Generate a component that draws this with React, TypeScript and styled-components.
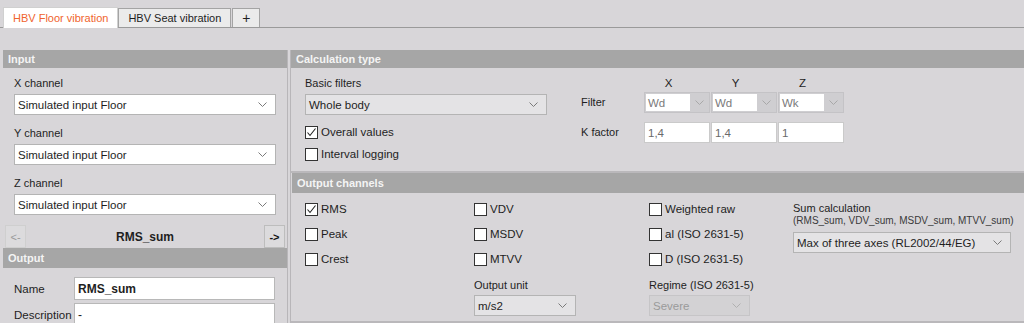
import styled, { createGlobalStyle } from "styled-components";

const GlobalStyle = createGlobalStyle`
  html, body {
    margin: 0;
    padding: 0;
    background: #d8d6d9;
    font-family: "Liberation Sans", Arial, sans-serif;
    font-size: 11px;
    color: #1e1e1e;
    overflow: hidden;
  }
`;

const Page = styled.div`
  width: 1024px;
  height: 323px;
  display: flex;
  flex-direction: column;
`;

const TabBar = styled.div`
  display: flex;
  align-items: flex-end;
  height: 28px;
  padding-left: 3px;
  border-bottom: 1px solid #9a9a9a;
  box-sizing: border-box;
`;

const Tab = styled.div<{ $active?: boolean }>`
  height: ${(p) => (p.$active ? "21px" : "19px")};
  display: flex;
  align-items: center;
  padding: 0 9px;
  box-sizing: border-box;
  font-size: 11px;
  background: ${(p) => (p.$active ? "#ffffff" : "#ebebeb")};
  color: ${(p) => (p.$active ? "#f0642d" : "#1e1e1e")};
  border: 1px solid ${(p) => (p.$active ? "#d0d0d0" : "#a4a4a4")};
  border-bottom: none;
  margin-bottom: ${(p) => (p.$active ? "-1px" : "0")};
`;

const PlusTab = styled(Tab)`
  width: 28px;
  justify-content: center;
  padding: 0;
  font-size: 14px;
  margin-left: 1px;
`;

const Main = styled.div`
  display: flex;
  margin-top: 22px;
  flex: 1;
  min-height: 0;
`;

const LeftPanel = styled.div`
  width: 284px;
  margin-left: 3px;
  border-right: 1px solid #b8b6b9;
  display: flex;
  flex-direction: column;
`;

const RightPanel = styled.div`
  flex: 1;
  margin-left: 2px;
  border-left: 1px solid #b8b6b9;
  display: flex;
  flex-direction: column;
`;

const Header = styled.div<{ $tall?: boolean }>`
  height: ${(p) => (p.$tall ? "20px" : "18px")};
  background: #a6a6a6;
  color: #f4f4f4;
  font-weight: bold;
  font-size: 11px;
  display: flex;
  align-items: center;
  padding-left: 5px;
  flex-shrink: 0;
`;

const LeftBody = styled.div`
  padding: 7px 11px 0 11px;
  display: flex;
  flex-direction: column;
`;

const Label = styled.div<{ $small?: boolean }>`
  height: ${(p) => (p.$small ? "12px" : "16px")};
  line-height: ${(p) => (p.$small ? "12px" : "16px")};
  font-size: ${(p) => (p.$small ? "10px" : "11px")};
  color: ${(p) => (p.$small ? "#3a3a3a" : "#1e1e1e")};
  white-space: nowrap;
`;

const GridLabel = styled(Label)`
  height: 21px;
  line-height: 21px;
`;

const SumLabel = styled(Label)`
  height: 14px;
  line-height: 14px;
  margin-top: -1px;
`;

const Field = styled.div<{ $mb?: number }>`
  display: flex;
  flex-direction: column;
  gap: 3px;
  margin-bottom: ${(p) => (p.$mb ?? 10)}px;
`;

const SelectBox = styled.div<{ $w?: number; $tone?: "white" | "grey" | "disabled" }>`
  width: ${(p) => (p.$w ? `${p.$w}px` : "auto")};
  height: 21px;
  box-sizing: border-box;
  display: flex;
  align-items: center;
  justify-content: space-between;
  padding: 0 8px 0 3px;
  background: ${(p) =>
    p.$tone === "grey" ? "#e4e3e5" : p.$tone === "disabled" ? "#d3d2d4" : "#ffffff"};
  border: 1px solid ${(p) => (p.$tone === "disabled" ? "#c6c5c7" : "#b4b4b4")};
  color: ${(p) => (p.$tone === "disabled" ? "#9a9a9a" : "#1e1e1e")};
  font-size: 11.5px;
  white-space: nowrap;
`;

const Chevron = ({ color = "#7a7a7a" }: { color?: string }) => (
  <svg width="9" height="5" viewBox="0 0 9 5">
    <polyline points="0.5,0.5 4.5,4.5 8.5,0.5" fill="none" stroke={color} strokeWidth="1" />
  </svg>
);

const NavRow = styled.div`
  display: flex;
  align-items: center;
  justify-content: space-between;
  height: 23px;
  margin: 0 -9px 0 -9px;
`;

const NavButton = styled.div<{ $disabled?: boolean }>`
  width: 21px;
  height: 23px;
  box-sizing: border-box;
  background: #dcdbdd;
  border: 1px solid ${(p) => (p.$disabled ? "#cfcfcf" : "#bdbdbd")};
  color: ${(p) => (p.$disabled ? "#9a9a9a" : "#111")};
  display: flex;
  align-items: center;
  justify-content: center;
  font-size: 11px;
  font-weight: ${(p) => (p.$disabled ? "normal" : "bold")};
`;

const NavTitle = styled.div`
  font-weight: bold;
  font-size: 12px;
  color: #1e1e1e;
`;

const OutputBody = styled.div`
  padding: 9px 12px 0 11px;
  display: flex;
  flex-direction: column;
  gap: 3px;
`;

const FormRow = styled.div`
  display: flex;
  align-items: center;
`;

const FormLabel = styled.div`
  width: 60px;
  font-size: 11.5px;
`;

const TextInput = styled.div<{ $bold?: boolean }>`
  flex: 1;
  height: 23px;
  box-sizing: border-box;
  background: #fff;
  border: 1px solid #b8b8b8;
  display: flex;
  align-items: center;
  padding-left: 3px;
  font-weight: ${(p) => (p.$bold ? "bold" : "normal")};
  font-size: 12px;
`;

const CalcSection = styled.div`
  height: 121px;
  flex-shrink: 0;
  border-bottom: 2px solid #bab8bb;
  display: flex;
  flex-direction: column;
`;

const CalcBody = styled.div`
  display: flex;
  padding: 7px 0 0 14px;
`;

const BasicCol = styled.div`
  width: 242px;
  display: flex;
  flex-direction: column;
`;

const CheckRow = styled.div`
  display: flex;
  align-items: center;
  gap: 3px;
  height: 14px;
  font-size: 11.5px;
  white-space: nowrap;
`;

const CheckStack = styled.div<{ $gap: number }>`
  display: flex;
  flex-direction: column;
  gap: ${(p) => p.$gap}px;
`;

const Box = styled.div`
  width: 13px;
  height: 13px;
  box-sizing: border-box;
  background: #fff;
  border: 1px solid #333;
  display: flex;
  align-items: center;
  justify-content: center;
`;

const Check = ({ label, checked }: { label: string; checked?: boolean }) => (
  <CheckRow>
    <Box>
      {checked && (
        <svg width="11" height="11" viewBox="0 0 11 11">
          <polyline points="1.5,5.5 4,8.5 9.5,1.5" fill="none" stroke="#222" strokeWidth="1.1" />
        </svg>
      )}
    </Box>
    {label}
  </CheckRow>
);

const AxisGrid = styled.div`
  margin-left: 34px;
  display: grid;
  grid-template-columns: 62px 66px 66px 66px;
  grid-template-rows: 17px 30px 21px;
  column-gap: 1px;
  align-items: start;
`;

const AxisHead = styled.div`
  text-align: center;
  font-size: 11.5px;
  line-height: 14px;
  padding-right: 17px;
  margin-top: 1px;
`;

const AxisSelect = styled.div`
  height: 21px;
  box-sizing: border-box;
  display: flex;
  background: #cfced1;
  border: 1px solid #c4c3c6;
`;

const AxisValue = styled.div`
  flex: 1;
  background: #fff;
  margin: 1px 0 1px 1px;
  display: flex;
  align-items: center;
  padding-left: 2px;
  color: #7a7a7a;
  font-size: 11.5px;
`;

const AxisArrow = styled.div`
  width: 19px;
  display: flex;
  align-items: center;
  justify-content: center;
`;

const AxisInput = styled.div`
  height: 21px;
  box-sizing: border-box;
  background: #fff;
  border: 1px solid #cacaca;
  display: flex;
  align-items: center;
  padding-left: 3px;
  color: #6a6a6a;
  font-size: 11.5px;
`;

const OutputSection = styled.div`
  flex: 1;
  display: flex;
  flex-direction: column;
  border-bottom: 2px solid #bab8bb;
`;

const OutputHeader = styled(Header)`
  margin-left: 1px;
`;

const ChannelBody = styled.div`
  display: flex;
  padding: 9px 0 0 14px;
`;

const Column = styled.div<{ $w: number }>`
  width: ${(p) => p.$w}px;
  display: flex;
  flex-direction: column;
`;

const UnitField = styled.div`
  display: flex;
  flex-direction: column;
  gap: 2px;
  margin-top: 11px;
`;

const SumSelect = styled(SelectBox)`
  margin-top: 5px;
`;

export default function App() {
  return (
    <>
      <GlobalStyle />
      <Page>
        <TabBar>
          <Tab $active>HBV Floor vibration</Tab>
          <Tab>HBV Seat vibration</Tab>
          <PlusTab>+</PlusTab>
        </TabBar>
        <Main>
          <LeftPanel>
            <Header>Input</Header>
            <LeftBody>
              {["X", "Y", "Z"].map((axis) => (
                <Field key={axis}>
                  <Label>{axis} channel</Label>
                  <SelectBox>
                    Simulated input Floor
                    <Chevron />
                  </SelectBox>
                </Field>
              ))}
              <NavRow>
                <NavButton $disabled>&lt;-</NavButton>
                <NavTitle>RMS_sum</NavTitle>
                <NavButton>-&gt;</NavButton>
              </NavRow>
            </LeftBody>
            <Header $tall>Output</Header>
            <OutputBody>
              <FormRow>
                <FormLabel>Name</FormLabel>
                <TextInput $bold>RMS_sum</TextInput>
              </FormRow>
              <FormRow>
                <FormLabel>Description</FormLabel>
                <TextInput>-</TextInput>
              </FormRow>
            </OutputBody>
          </LeftPanel>
          <RightPanel>
            <CalcSection>
              <Header>Calculation type</Header>
              <CalcBody>
                <BasicCol>
                  <Field $mb={10}>
                    <Label>Basic filters</Label>
                    <SelectBox $tone="grey">
                      Whole body
                      <Chevron />
                    </SelectBox>
                  </Field>
                  <CheckStack $gap={8}>
                    <Check label="Overall values" checked />
                    <Check label="Interval logging" />
                  </CheckStack>
                </BasicCol>
                <AxisGrid>
                  <div />
                  <AxisHead>X</AxisHead>
                  <AxisHead>Y</AxisHead>
                  <AxisHead>Z</AxisHead>
                  <GridLabel>Filter</GridLabel>
                  {["Wd", "Wd", "Wk"].map((v, i) => (
                    <AxisSelect key={i}>
                      <AxisValue>{v}</AxisValue>
                      <AxisArrow>
                        <Chevron color="#a8a8a8" />
                      </AxisArrow>
                    </AxisSelect>
                  ))}
                  <GridLabel>K factor</GridLabel>
                  <AxisInput>1,4</AxisInput>
                  <AxisInput>1,4</AxisInput>
                  <AxisInput>1</AxisInput>
                </AxisGrid>
              </CalcBody>
            </CalcSection>
            <OutputSection>
              <OutputHeader $tall>Output channels</OutputHeader>
              <ChannelBody>
                <Column $w={169}>
                  <CheckStack $gap={11}>
                    <Check label="RMS" checked />
                    <Check label="Peak" />
                    <Check label="Crest" />
                  </CheckStack>
                </Column>
                <Column $w={175}>
                  <CheckStack $gap={11}>
                    <Check label="VDV" />
                    <Check label="MSDV" />
                    <Check label="MTVV" />
                  </CheckStack>
                  <UnitField>
                    <Label>Output unit</Label>
                    <SelectBox $w={102} $tone="grey">
                      m/s2
                      <Chevron />
                    </SelectBox>
                  </UnitField>
                </Column>
                <Column $w={144}>
                  <CheckStack $gap={11}>
                    <Check label="Weighted raw" />
                    <Check label="al (ISO 2631-5)" />
                    <Check label="D (ISO 2631-5)" />
                  </CheckStack>
                  <UnitField>
                    <Label>Regime (ISO 2631-5)</Label>
                    <SelectBox $w={101} $tone="disabled">
                      Severe
                      <Chevron color="#b0b0b0" />
                    </SelectBox>
                  </UnitField>
                </Column>
                <Column $w={218}>
                  <SumLabel>Sum calculation</SumLabel>
                  <Label $small>(RMS_sum, VDV_sum, MSDV_sum, MTVV_sum)</Label>
                  <SumSelect $tone="grey">
                    Max of three axes (RL2002/44/EG)
                    <Chevron />
                  </SumSelect>
                </Column>
              </ChannelBody>
            </OutputSection>
          </RightPanel>
        </Main>
      </Page>
    </>
  );
}
